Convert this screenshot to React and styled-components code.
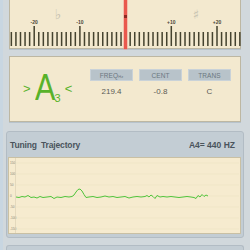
import React from "react";
import styled, { createGlobalStyle } from "styled-components";

const GlobalStyle = createGlobalStyle`
  html, body {
    margin: 0;
    padding: 0;
    background: #d1d8dc;
  }
  body {
    font-family: "Liberation Sans", Arial, sans-serif;
    width: 250px;
    height: 250px;
    overflow: hidden;
  }
`;

const Page = styled.div`
  width: 250px;
  height: 250px;
  box-sizing: border-box;
  border-left: 3px solid #c8d6e1;
  padding: 0 9px 0 6px;
  display: flex;
  flex-direction: column;
  background: #d1d8dc;
`;

const cream = "#f3e9cf";

const ScalePanel = styled.div`
  position: relative;
  height: 48px;
  background: ${cream};
  border: 1px solid #bdb7a2;
  border-top: none;
  margin-bottom: 7px;
  box-shadow: 0 1px 0 #b7c3cc;
`;

const Needle = styled.div`
  position: absolute;
  left: 114px;
  top: 0;
  bottom: -1px;
  width: 3px;
  background: #e9594e;
  box-shadow: 0 0 0 0.5px #f29a8f;

  &::after {
    content: "";
    position: absolute;
    left: 0;
    top: 15px;
    width: 3px;
    height: 3px;
    background: #8e2a22;
  }
`;

const NotePanel = styled.div`
  height: 64px;
  background: ${cream};
  border: 1px solid #bdb7a2;
  display: flex;
  align-items: flex-start;
  margin-bottom: 9px;
  box-shadow: 0 1px 0 #b7c3cc;
`;

const NoteName = styled.div`
  width: 80px;
  display: flex;
  align-items: center;
  padding-left: 13px;
  box-sizing: border-box;
  height: 62px;
  color: #58b22a;
`;

const Chevron = styled.span`
  font-size: 13px;
  line-height: 1;
  margin-top: 1px;
`;

const Letter = styled.span`
  font-size: 36px;
  line-height: 1;
  margin-left: 4px;
  transform: scaleX(0.85);
  transform-origin: left center;
  display: inline-block;
  width: 20px;
`;

const Octave = styled.span`
  font-size: 11px;
  align-self: flex-end;
  margin-bottom: 15px;
  margin-right: 4px;
`;

const Readouts = styled.div`
  display: flex;
  gap: 6px;
  margin-top: 12px;
`;

const Readout = styled.div`
  width: 43px;
  display: flex;
  flex-direction: column;
  align-items: center;
`;

const Label = styled.div`
  width: 100%;
  height: 12px;
  background: #b8c3ca;
  border: 1px solid #c9d2d8;
  box-sizing: border-box;
  color: #6c7780;
  font-size: 6.5px;
  display: flex;
  align-items: center;
  justify-content: center;
  letter-spacing: 0.1px;
`;

const Unit = styled.span`
  font-size: 4px;
  margin-top: 2px;
`;

const Value = styled.div`
  margin-top: 6px;
  font-size: 8px;
  color: #5b5b56;
`;

const TrajPanel = styled.div`
  height: 107px;
  margin: 0 -3px 7px -3px;
  background: #c3cdd4;
  border: 1px solid #b2bcc4;
  border-radius: 3px;
  box-sizing: border-box;
  display: flex;
  flex-direction: column;
`;

const TrajHeader = styled.div`
  height: 25px;
  display: flex;
  align-items: center;
  justify-content: space-between;
  padding: 0 8px 0 3px;
  color: #4a545c;
  font-weight: bold;
  font-size: 8.5px;
`;

const Title = styled.span`
  letter-spacing: -0.15px;
  word-spacing: 2px;
`;

const Chart = styled.div`
  margin: 0 2px 0 1px;
  height: 77px;
  background: #f6ebcf;
  border: 1px solid #c9c0a4;
  box-sizing: border-box;
`;

const NextPanel = styled.div`
  flex: 1;
  margin: 0 -3px;
  background: #c3cdd4;
  border: 1px solid #b2bcc4;
  border-bottom: none;
  border-radius: 3px 3px 0 0;
`;

const CENTER = 115.6;
const STEP = 4.57;

function Scale() {
  const ticks = [];
  for (let i = -25; i <= 25; i++) {
    const x = CENTER + i * STEP;
    const long = i % 10 === 0;
    ticks.push(
      <rect key={i} x={x - 0.75} y={long ? 26 : 32} width={1.5} height={long ? 20 : 14} fill="#45432f" />
    );
  }
  const labels = [-20, -10, 10, 20];
  return (
    <svg width="231" height="48" style={{ display: "block" }}>
      {ticks}
      {labels.map((v) => (
        <text
          key={v}
          x={CENTER + v * STEP}
          y="24"
          fontSize="5"
          fontWeight="bold"
          fill="#4a4638"
          textAnchor="middle"
          fontFamily="Liberation Sans, sans-serif"
        >
          {v > 0 ? `+${v}` : v}
        </text>
      ))}
      <text x="48" y="19" fontSize="14" fill="#c6c1b0" textAnchor="middle" fontFamily="DejaVu Sans, sans-serif">
        ♭
      </text>
      <text x="186" y="19" fontSize="13" fill="#c6c1b0" textAnchor="middle" fontFamily="DejaVu Sans, sans-serif">
        ♯
      </text>
    </svg>
  );
}

const linePts = [
  [7, 39], [10, 39.5], [13, 38.5], [16, 39], [19, 37.5], [22, 39.5], [25, 39], [28, 40],
  [31, 38.5], [34, 39.5], [38, 39], [42, 38.5], [45, 40.5], [48, 39], [52, 39.5], [56, 38.5],
  [60, 39], [63, 38.5], [65, 37], [67, 34], [69, 31.5], [71, 31], [73, 33], [75, 36.5],
  [77, 39.5], [80, 39], [84, 38.5], [88, 39.5], [92, 39], [96, 38], [100, 39], [104, 38.5],
  [108, 39.5], [112, 39], [116, 38.5], [120, 40], [124, 39], [128, 38.5], [132, 39],
  [136, 38.5], [138, 37.5], [140, 39], [142, 37], [144, 38.5], [146, 40.5], [148, 37.5],
  [151, 39], [154, 38.5], [158, 39], [162, 38.5], [166, 39], [170, 39.5], [174, 39],
  [178, 38.5], [182, 39], [185, 39.5], [187, 40.5], [189, 37.5], [191, 39], [193, 36.5],
  [195, 38.5], [197, 37], [199, 38],
];

function Trajectory() {
  const axis = [150, 100, 50, 0, -50, -100, -150];
  const d = linePts.map((p, i) => `${i ? "L" : "M"}${p[0]} ${p[1]}`).join(" ");
  return (
    <svg width="230" height="75" style={{ display: "block" }}>
      {axis.map((v, i) => (
        <g key={v}>
          <line x1="7" x2="230" y1={5 + i * 11} y2={5 + i * 11} stroke="#efe3c4" strokeWidth="0.6" />
          <text x="1" y={6.2 + i * 11} fontSize="3.2" fill="#8a8577" fontFamily="Liberation Sans, sans-serif">
            {v}
          </text>
        </g>
      ))}
      <line x1="6.5" x2="6.5" y1="0" y2="75" stroke="#d8ccb0" strokeWidth="0.6" />
      <path d={d} fill="none" stroke="#4fc43a" strokeWidth="1" strokeLinejoin="round" />
    </svg>
  );
}

export default function App() {
  return (
    <Page>
      <GlobalStyle />
      <ScalePanel>
        <Scale />
        <Needle />
      </ScalePanel>
      <NotePanel>
        <NoteName>
          <Chevron>&gt;</Chevron>
          <Letter>A</Letter>
          <Octave>3</Octave>
          <Chevron>&lt;</Chevron>
        </NoteName>
        <Readouts>
          <Readout>
            <Label>
              FREQ<Unit>Hz</Unit>
            </Label>
            <Value>219.4</Value>
          </Readout>
          <Readout>
            <Label>CENT</Label>
            <Value>-0.8</Value>
          </Readout>
          <Readout>
            <Label>TRANS</Label>
            <Value>C</Value>
          </Readout>
        </Readouts>
      </NotePanel>
      <TrajPanel>
        <TrajHeader>
          <Title>Tuning Trajectory</Title>
          <span>A4= 440 HZ</span>
        </TrajHeader>
        <Chart>
          <Trajectory />
        </Chart>
      </TrajPanel>
      <NextPanel />
    </Page>
  );
}
